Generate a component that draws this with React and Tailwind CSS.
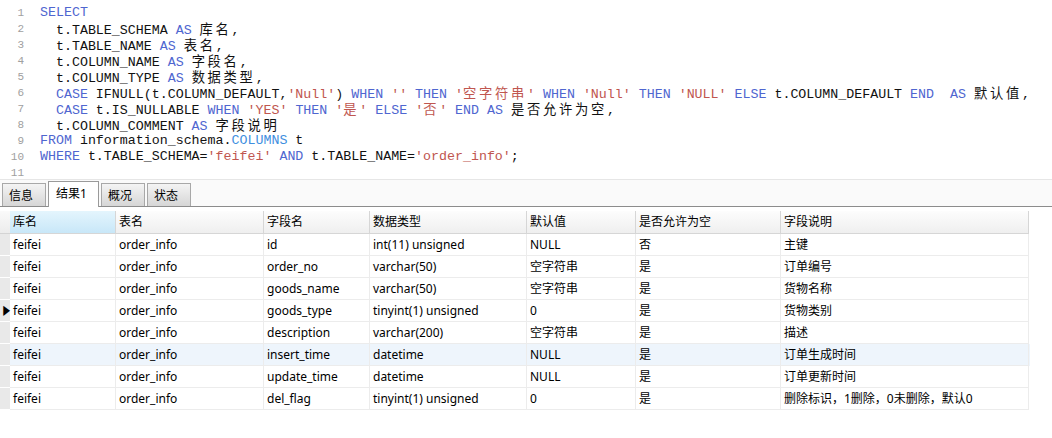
import React from 'react';

const mono = { fontFamily: '"Liberation Mono", "Noto Sans CJK SC", monospace' };

// keyword / string / object colours in the editor
const K = ({ children }) => <span className="text-[#4f66d0]">{children}</span>;
const S = ({ children }) => <span className="text-[#c0564f]">{children}</span>;
const O = ({ children }) => <span className="text-[#3f8fe0]">{children}</span>;

// CJK glyphs in the editor take two mono cells (13.3px glyph + spacing = 16px)
const Wide = ({ text }) =>
  text.split(/([\u4e00-\u9fff]+)/).map((part, i) =>
    /[\u4e00-\u9fff]/.test(part) ? (
      <span key={i} className="tracking-[2.7px]" style={{ fontFamily: '"Noto Sans CJK SC", sans-serif' }}>
        {part}
      </span>
    ) : (
      <React.Fragment key={i}>{part}</React.Fragment>
    )
  );

const lines = [
  <><K>SELECT</K></>,
  <>{'  t.TABLE_SCHEMA '}<K>AS</K> <Wide text="库名," /></>,
  <>{'  t.TABLE_NAME '}<K>AS</K> <Wide text="表名," /></>,
  <>{'  t.COLUMN_NAME '}<K>AS</K> <Wide text="字段名," /></>,
  <>{'  t.COLUMN_TYPE '}<K>AS</K> <Wide text="数据类型," /></>,
  <>
    {'  '}<K>CASE</K>{' IFNULL(t.COLUMN_DEFAULT,'}<S>'Null'</S>{') '}<K>WHEN</K> <S>''</S> <K>THEN</K>{' '}
    <S><Wide text="'空字符串'" /></S> <K>WHEN</K> <S>'Null'</S> <K>THEN</K> <S>'NULL'</S> <K>ELSE</K>
    {' t.COLUMN_DEFAULT '}<K>END</K>{'  '}<K>AS</K> <Wide text="默认值," />
  </>,
  <>
    {'  '}<K>CASE</K>{' t.IS_NULLABLE '}<K>WHEN</K> <S>'YES'</S> <K>THEN</K> <S><Wide text="'是'" /></S> <K>ELSE</K>{' '}
    <S><Wide text="'否'" /></S> <K>END</K> <K>AS</K> <Wide text="是否允许为空," />
  </>,
  <>{'  t.COLUMN_COMMENT '}<K>AS</K> <Wide text="字段说明" /></>,
  <><K>FROM</K>{' information_schema.'}<O>COLUMNS</O>{' t'}</>,
  <><K>WHERE</K>{' t.TABLE_SCHEMA='}<S>'feifei'</S> <K>AND</K>{' t.TABLE_NAME='}<S>'order_info'</S>;</>,
  <></>,
];

const columns = [
  { title: '库名', w: 'w-[106px]' },
  { title: '表名', w: 'w-[148px]' },
  { title: '字段名', w: 'w-[106px]' },
  { title: '数据类型', w: 'w-[157px]' },
  { title: '默认值', w: 'w-[109px]' },
  { title: '是否允许为空', w: 'w-[145px]' },
  { title: '字段说明', w: 'w-[248px]' },
];

const rows = [
  ['id', 'int(11) unsigned', 'NULL', '否', '主键'],
  ['order_no', 'varchar(50)', '空字符串', '是', '订单编号'],
  ['goods_name', 'varchar(50)', '空字符串', '是', '货物名称'],
  ['goods_type', 'tinyint(1) unsigned', '0', '是', '货物类别'],
  ['description', 'varchar(200)', '空字符串', '是', '描述'],
  ['insert_time', 'datetime', 'NULL', '是', '订单生成时间'],
  ['update_time', 'datetime', 'NULL', '是', '订单更新时间'],
  ['del_flag', 'tinyint(1) unsigned', '0', '是', '删除标识，1删除，0未删除，默认0'],
];

const tabs = ['信息', '结果1', '概况', '状态'];

export default function App() {
  return (
    <div
      className="w-[1052px] h-[438px] bg-white overflow-hidden text-black"
      style={{ fontFamily: '"Noto Sans", "Noto Sans CJK SC", sans-serif' }}
    >
      {/* editor */}
      <div className="h-[180px] pt-[5px] border-b border-[#e6e6e6]">
        {lines.map((line, i) => (
          <div key={i} className="flex h-[16px] items-center">
            <div className="w-[24px] shrink-0 text-right text-[11px] text-[#a0a0a0]" style={mono}>
              {i + 1}
            </div>
            <div className="pl-[16px] h-[16px] whitespace-pre text-[13.3px] leading-[16px] text-[#111]" style={mono}>
              {line}
            </div>
          </div>
        ))}
      </div>

      {/* result tabs */}
      <div className="h-[27px] flex items-end gap-[2px] pl-[2px] border-b border-[#8c8c8c] bg-[#fafafa]">
        {tabs.map((t) =>
          t === '结果1' ? (
            <div
              key={t}
              className="h-[26px] -mb-px w-[51px] pl-[7px] pt-[3px] text-[12px] bg-white border border-b-0 border-[#9a9a9a]"
            >
              {t}
            </div>
          ) : (
            <div
              key={t}
              className="h-[23px] w-[44px] pl-[6px] pt-[3px] text-[12px] border border-b-0 border-[#a8a8a8] bg-gradient-to-b from-[#f4f4f4] to-[#d6d6d6]"
            >
              {t}
            </div>
          )
        )}
      </div>

      {/* grid */}
      <div className="w-[1030px] text-[12px]">
        <div className="flex h-[27px] pt-[4px] bg-white">
          <div className="w-[10px] shrink-0 bg-gradient-to-b from-[#fafafa] to-[#ececec] border-b border-[#d4d4d4]" />
          {columns.map((c, i) => (
            <div
              key={c.title}
              className={`${c.w} shrink-0 flex items-center pl-[3px] border-r border-b border-[#d6d6d6] ${
                i === 0
                  ? 'bg-gradient-to-b from-[#e4f5fd] to-[#c8e7f8]'
                  : 'bg-gradient-to-b from-[#fdfdfd] to-[#efefef]'
              }`}
            >
              {c.title}
            </div>
          ))}
        </div>
        {rows.map((r, ri) => (
          <div key={ri} className={`flex h-[22px] ${ri === 5 ? 'bg-[#eef5fc]' : 'bg-white'}`}>
            <div className="w-[10px] shrink-0 flex items-center bg-[#e9e9e9] border-b border-white">
              {ri === 3 && <span className="text-[11px] leading-none pl-[1px] scale-x-75">▶</span>}
            </div>
            {['feifei', 'order_info', ...r].map((v, ci) => (
              <div
                key={ci}
                className={`${columns[ci].w} shrink-0 flex items-center pl-[3px] whitespace-nowrap overflow-hidden border-r border-b border-[#ececec]`}
              >
                {v}
              </div>
            ))}
          </div>
        ))}
      </div>
    </div>
  );
}
